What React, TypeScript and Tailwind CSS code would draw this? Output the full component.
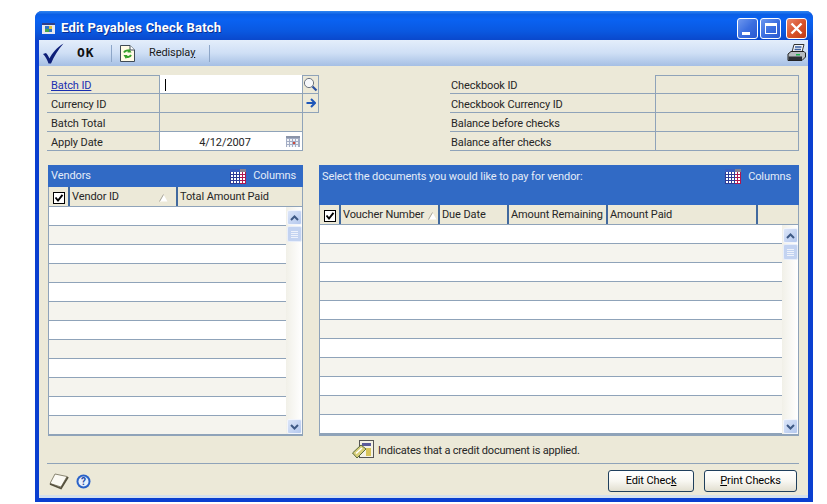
const font = "font-['Roboto',Arial,sans-serif]";

function ColumnsIcon() {
  const rows = [3, 6, 9, 12];
  const cols = [1, 4, 7, 10, 13];
  return (
    <svg width="16" height="15" viewBox="0 0 16 15" className="block">
      <rect width="10" height="15" fill="#2e3c96" />
      <rect x="10" width="6" height="15" fill="#b0174f" />
      <rect width="10" height="3" fill="#3b5fc0" />
      <rect x="10" width="6" height="3" fill="#8a8290" />
      {rows.map(y =>
        cols.map(x => <rect key={`${x}-${y}`} x={x} y={y} width="2" height="2" fill="#fff" />)
      )}
    </svg>
  );
}

function CheckBox() {
  return (
    <div className="w-[12px] h-[12px] border border-black bg-white flex items-center justify-center">
      <svg width="10" height="10" viewBox="0 0 10 10">
        <path d="M1.5 4.5 L4 7.5 L8.5 1.8" fill="none" stroke="#000" strokeWidth="1.9" />
      </svg>
    </div>
  );
}

function SortMark() {
  return (
    <svg width="9" height="8" viewBox="0 0 9 8">
      <path d="M4.5 0.5 L8.5 7.5 L0.5 7.5 Z" fill="#fff" />
      <path d="M4.5 0.5 L0.5 7.5" stroke="#a6a396" fill="none" />
    </svg>
  );
}

function ScrollButton({ up }: { up?: boolean }) {
  return (
    <div className="w-[15px] h-[15px] mx-auto bg-gradient-to-br from-[#dbe5f8] to-[#b4c8ee] border border-[#f2f5fc] rounded-[2px] flex items-center justify-center">
      <svg width="9" height="6" viewBox="0 0 9 6">
        <path
          d={up ? 'M1 5 L4.5 1.5 L8 5' : 'M1 1 L4.5 4.5 L8 1'}
          fill="none"
          stroke="#3f5a85"
          strokeWidth="2"
        />
      </svg>
    </div>
  );
}

function ScrollBar() {
  return (
    <div className="w-[16px] shrink-0 flex flex-col justify-between bg-gradient-to-r from-[#f1f0e8] to-white pt-[3px]">
      <div>
        <ScrollButton up />
        <div className="w-[15px] h-[16px] mx-auto mt-[1px] bg-[#c3d3f1] border border-[#e8eefa] rounded-[2px] flex flex-col items-center justify-center gap-[1px]">
          {[0, 1, 2, 3].map(i => (
            <div key={i} className="w-[7px] h-[1px] bg-[#eef2fb]" />
          ))}
        </div>
      </div>
      <ScrollButton />
    </div>
  );
}

function Rows({ count }: { count: number }) {
  return (
    <div className="flex-1 overflow-hidden">
      {Array.from({ length: count }).map((_, i) => (
        <div
          key={i}
          className={`h-[19px] border-b border-[#8fa3b9] ${i % 2 === 0 ? 'bg-white' : 'bg-[#f5f4ee]'}`}
        />
      ))}
    </div>
  );
}

function HeadCell({ className, children }: { className: string; children?: React.ReactNode }) {
  return (
    <div className={`h-full flex items-center border-r-2 border-[#41699e] bg-[#ece9d8] pl-[2px] pt-[2px] whitespace-nowrap ${className}`}>
      {children}
    </div>
  );
}

function FieldRow({ label, link, children, extra }: { label: string; link?: boolean; children?: React.ReactNode; extra?: React.ReactNode }) {
  return (
    <div className="flex h-[19px]">
      <div className="w-[112px] border-b border-[#8fa3b9] flex items-center pl-[4px] pt-[4px]">
        {link ? <span className="text-[#1a2fb0] underline">{label}</span> : label}
      </div>
      <div className="w-[144px] border-b border-l border-r border-[#8fa3b9] flex items-center relative">
        {children}
      </div>
      {extra}
    </div>
  );
}

function RightField({ label }: { label: string }) {
  return (
    <div className="flex h-[19px]">
      <div className="w-[205px] border-b border-[#8fa3b9] flex items-center pl-[1px] pt-[4px]">{label}</div>
      <div className="w-[144px] border-b border-l border-r border-[#8fa3b9]" />
    </div>
  );
}

function WinButton({ close, children }: { close?: boolean; children: React.ReactNode }) {
  return (
    <div
      className={`w-[21px] h-[21px] rounded-[3px] border border-white flex items-center justify-center ${
        close
          ? 'bg-gradient-to-br from-[#e8866a] via-[#d9542c] to-[#c03a12]'
          : 'bg-gradient-to-br from-[#6e97ee] via-[#3c6fe0] to-[#2a58d0]'
      }`}
    >
      {children}
    </div>
  );
}

function ActionButton({ className, children }: { className: string; children: React.ReactNode }) {
  return (
    <button className={`h-[22px] rounded-[3px] border border-[#1f3f5c] bg-gradient-to-b from-white via-[#f8f7f2] to-[#e2dfd0] text-black ${className}`}>
      {children}
    </button>
  );
}

export default function App() {
  return (
    <div className={`min-h-screen bg-white pl-[35px] pt-[11px] text-[11px] tracking-[-0.1px] text-[#262626] ${font}`}>
      <div className="w-[778px] h-[491px] flex flex-col rounded-t-[7px] overflow-hidden bg-[#0a3fd0]">
        {/* title bar */}
        <div className="h-[29px] shrink-0 flex items-center pl-[7px] pr-[6px] bg-[linear-gradient(180deg,#2f86f0_0%,#0a5ee6_12%,#0a62f2_30%,#0a58e0_70%,#0a48cc_100%)]">
          <svg width="13" height="11" viewBox="0 0 13 11" className="shrink-0 mt-[5px]">
            <rect width="13" height="11" fill="#e8e8ee" />
            <rect y="0" width="13" height="2" fill="#30408a" />
            <rect x="3" y="3" width="4" height="3" fill="#2b74c8" />
            <rect x="7" y="3" width="3" height="3" fill="#e3c23c" />
            <rect x="3" y="6" width="4" height="3" fill="#45a84a" />
            <rect x="7" y="6" width="3" height="3" fill="#2b74c8" />
          </svg>
          <div className="ml-[6px] mt-[5px] font-bold text-white text-[13px] tracking-[0.2px] [text-shadow:1px_1px_0_#0a2f90]">
            Edit Payables Check Batch
          </div>
          <div className="ml-auto flex gap-[2px] pt-[6px]">
            <WinButton>
              <div className="w-[8px] h-[3px] bg-white mt-[9px] -ml-[3px]" />
            </WinButton>
            <WinButton>
              <div className="w-[12px] h-[11px] border border-white border-t-[3px]" />
            </WinButton>
            <div className="w-[1px]" />
            <WinButton close>
              <svg width="13" height="13" viewBox="0 0 13 13">
                <path d="M1.5 1.5 L11.5 11.5 M11.5 1.5 L1.5 11.5" stroke="#fff" strokeWidth="2.4" />
              </svg>
            </WinButton>
          </div>
        </div>

        <div className="flex-1 min-h-0 ml-[4px] mr-[5px] mb-[4px] flex flex-col bg-[#ece9d8] border-b-[3px] border-[#d3e0ee]">
          {/* toolbar */}
          <div className="h-[26px] shrink-0 flex items-center bg-gradient-to-b from-[#e4eefb] via-[#cfdff5] to-[#a5bfe4]">
            <svg width="21" height="21" viewBox="0 0 21 21" className="ml-[4px] shrink-0">
              <path d="M0 11 L3 10 C4.5 11.5 5.5 13.5 6.5 15.5 C9 10 14 4.5 20.5 0.5 C15 7 11 13 8 20.5 L5.5 20.5 C4.5 17 2.5 13.5 0 11 Z" fill="#0e1f78" />
            </svg>
            <span className="ml-[13px] w-[20px] font-bold text-[13px] text-[#111] font-['DejaVu_Sans_Mono',monospace] tracking-[1px]">OK</span>
            <div className="ml-[14px] w-[1px] h-[17px] bg-[#8da6c8]" />
            <svg width="15" height="17" viewBox="0 0 15 17" className="ml-[8px] shrink-0">
              <path d="M0.5 0.5 H10 L14.5 5 V16.5 H0.5 Z" fill="#fffbe6" stroke="#3f4a55" />
              <path d="M10 0.5 V5 H14.5" fill="#fff" stroke="#3f4a55" />
              <path d="M4 7.5 A4 4 0 0 1 9.5 6 M11 10 A4 4 0 0 1 5.5 11.5" stroke="#35a02a" strokeWidth="2" fill="none" />
              <path d="M9 3.5 L11.5 7.5 L7.5 7.5 Z M6 14 L3.5 10 L7.5 10 Z" fill="#35a02a" />
            </svg>
            <span className="ml-[14px] w-[47px] text-[#1a1a1a]">
              Redispla<span className="underline">y</span>
            </span>
            <div className="ml-[13px] w-[1px] h-[17px] bg-[#8da6c8]" />
            <svg width="19" height="18" viewBox="0 0 19 18" className="ml-auto mr-[2px] shrink-0">
              <path d="M7 0.5 H17 L15 8 H5 Z" fill="#f4f6fa" stroke="#333" />
              <path d="M8 3 H14.5 M7.5 5.5 H14" stroke="#3a5fa0" strokeWidth="1.3" />
              <path d="M1 10 L4 7.5 H17 L18.5 9 V13 L15 16.5 H1 Z" fill="#b5bbc0" stroke="#222" />
              <rect x="1.5" y="12.5" width="13.5" height="3.5" fill="#2a2e34" />
              <rect x="9" y="10" width="4" height="1.5" fill="#1db34a" />
            </svg>
          </div>

          {/* form fields */}
          <div className="pt-[9px] pl-[8px] flex shrink-0">
            <div className="w-[272px] relative">
              <div className="absolute top-0 left-0 w-[272px] h-[1px] bg-[#8fa3b9]" />
              <FieldRow
                label="Batch ID"
                link
                extra={
                  <div className="w-[16px] border-b border-r border-t border-[#8fa3b9] flex items-center justify-center">
                    <svg width="15" height="15" viewBox="0 0 15 15">
                      <circle cx="6" cy="6" r="4.6" fill="#f6f8fb" stroke="#6c7480" />
                      <path d="M9.5 9.5 L13.5 13.5" stroke="#2a4fa0" strokeWidth="2.2" />
                    </svg>
                  </div>
                }
              >
                <div className="absolute inset-0 bg-white flex items-center pl-[5px]">
                  <div className="w-[1px] h-[12px] bg-black mt-[1px]" />
                </div>
              </FieldRow>
              <FieldRow
                label="Currency ID"
                extra={
                  <div className="w-[16px] border-b border-r border-[#8fa3b9] flex items-center justify-center">
                    <svg width="10" height="10" viewBox="0 0 10 10">
                      <path d="M0.5 5 H8 M5 1 L9 5 L5 9" stroke="#1d56b8" strokeWidth="2" fill="none" />
                    </svg>
                  </div>
                }
              />
              <FieldRow label="Batch Total" />
              <FieldRow label="Apply Date">
                <div className="absolute inset-0 bg-white flex items-center justify-center pr-[12px] pt-[4px]">4/12/2007</div>
                <svg width="14" height="11" viewBox="0 0 14 11" className="absolute right-[2px] top-[4px]">
                  <rect width="14" height="11" fill="#a3adc4" />
                  <rect width="14" height="2" fill="#8a94a8" />
                  {[1, 4, 7, 10].map(x =>
                    [3, 6, 9].map(y => (
                      <rect key={`${x}-${y}`} x={x} y={y} width="2" height="2" fill={x === 7 && y === 6 ? '#d04a3a' : '#f2f4f8'} />
                    ))
                  )}
                </svg>
              </FieldRow>
            </div>
            <div className="w-[349px] ml-[131px] relative">
              <div className="absolute top-0 right-0 w-[144px] h-[1px] bg-[#8fa3b9]" />
              <RightField label="Checkbook ID" />
              <RightField label="Checkbook Currency ID" />
              <RightField label="Balance before checks" />
              <RightField label="Balance after checks" />
            </div>
          </div>

          {/* panels */}
          <div className="mt-[14px] ml-[9px] flex gap-[16px] h-[271px] shrink-0">
            <div className="w-[255px] flex flex-col border-x border-b-2 border-[#8fa3b9]">
              <div className="h-[22px] -mx-[1px] bg-[#316ac5] flex items-center pl-[3px] pr-[7px] text-[#e4ecf8] shrink-0">
                <span className="pt-[1px]">Vendors</span>
                <div className="ml-auto"><ColumnsIcon /></div>
                <span className="ml-[7px] pt-[1px]">Columns</span>
              </div>
              <div className="h-[20px] flex shrink-0 border-b border-[#8fa3b9]">
                <HeadCell className="w-[21px] justify-center !pl-0"><CheckBox /></HeadCell>
                <HeadCell className="w-[108px] justify-between pr-[8px]">
                  <span>Vendor ID</span>
                  <SortMark />
                </HeadCell>
                <div className="flex-1 flex items-center pl-[2px] pt-[2px] bg-[#ece9d8]">Total Amount Paid</div>
              </div>
              <div className="flex-1 flex min-h-0">
                <Rows count={12} />
                <ScrollBar />
              </div>
            </div>

            <div className="w-[480px] flex flex-col border-x border-b-2 border-[#8fa3b9]">
              <div className="h-[40px] -mx-[1px] bg-[#316ac5] flex items-start pt-[4px] pl-[3px] pr-[8px] text-[#e4ecf8] shrink-0">
                <span>Select the documents you would like to pay for vendor:</span>
                <div className="ml-auto"><ColumnsIcon /></div>
                <span className="ml-[7px]">Columns</span>
              </div>
              <div className="h-[20px] flex shrink-0 border-b border-[#8fa3b9]">
                <HeadCell className="w-[21px] justify-center !pl-0"><CheckBox /></HeadCell>
                <HeadCell className="w-[99px] justify-between pr-[1px]">
                  <span>Voucher Number</span>
                  <SortMark />
                </HeadCell>
                <HeadCell className="w-[69px]">Due Date</HeadCell>
                <HeadCell className="w-[99px]">Amount Remaining</HeadCell>
                <HeadCell className="w-[150px]">Amount Paid</HeadCell>
                <div className="flex-1 bg-[#ece9d8]" />
              </div>
              <div className="flex-1 flex min-h-0">
                <Rows count={11} />
                <ScrollBar />
              </div>
            </div>
          </div>

          {/* legend */}
          <div className="h-[27px] shrink-0 flex items-center pl-[313px]">
            <svg width="22" height="19" viewBox="0 0 22 19" className="shrink-0">
              <rect x="7.5" y="0.5" width="14" height="17" fill="#f4f1e4" stroke="#555" />
              <rect x="10" y="3" width="9" height="3" fill="#5a5a9a" />
              <rect x="14" y="8" width="5" height="8" fill="#d8c45a" />
              <path d="M0.5 13 L9 5 L14 9 L5 18 Z" fill="#d8cf7a" stroke="#5a6a3a" />
              <path d="M4 13.5 L10 8" stroke="#fff" strokeWidth="1.5" />
            </svg>
            <span className="ml-[4px] pt-[3px] tracking-[-0.2px]">Indicates that a credit document is applied.</span>
          </div>

          {/* footer */}
          <div className="ml-[8px] mr-[9px] border-t border-[#8fa3b9] flex-1 flex items-start pt-[6px] pr-[2px]">
            <svg width="20" height="17" viewBox="0 0 20 17" className="ml-[2px] mt-[3px] shrink-0">
              <path d="M6 1 L18 3.5 L12 14 L1 10.5 Z" fill="#fbfaf4" stroke="#8a8672" strokeWidth="1" />
              <path d="M1 11 L12 15.5 L19 4" fill="none" stroke="#55513e" strokeWidth="1.8" />
            </svg>
            <svg width="15" height="15" viewBox="0 0 15 15" className="ml-[7px] mt-[4px] shrink-0">
              <circle cx="7.5" cy="7.5" r="7" fill="#2a62c8" />
              <circle cx="7.5" cy="7.5" r="5" fill="#e8f0fb" />
              <text x="7.5" y="11" textAnchor="middle" fontSize="10" fontWeight="bold" fill="#1c4aa8">?</text>
            </svg>
            <ActionButton className="ml-auto w-[86px]">
              Edit Chec<span className="underline">k</span>
            </ActionButton>
            <ActionButton className="ml-[10px] w-[93px]">
              <span className="underline">P</span>rint Checks
            </ActionButton>
          </div>
        </div>
      </div>
    </div>
  );
}
